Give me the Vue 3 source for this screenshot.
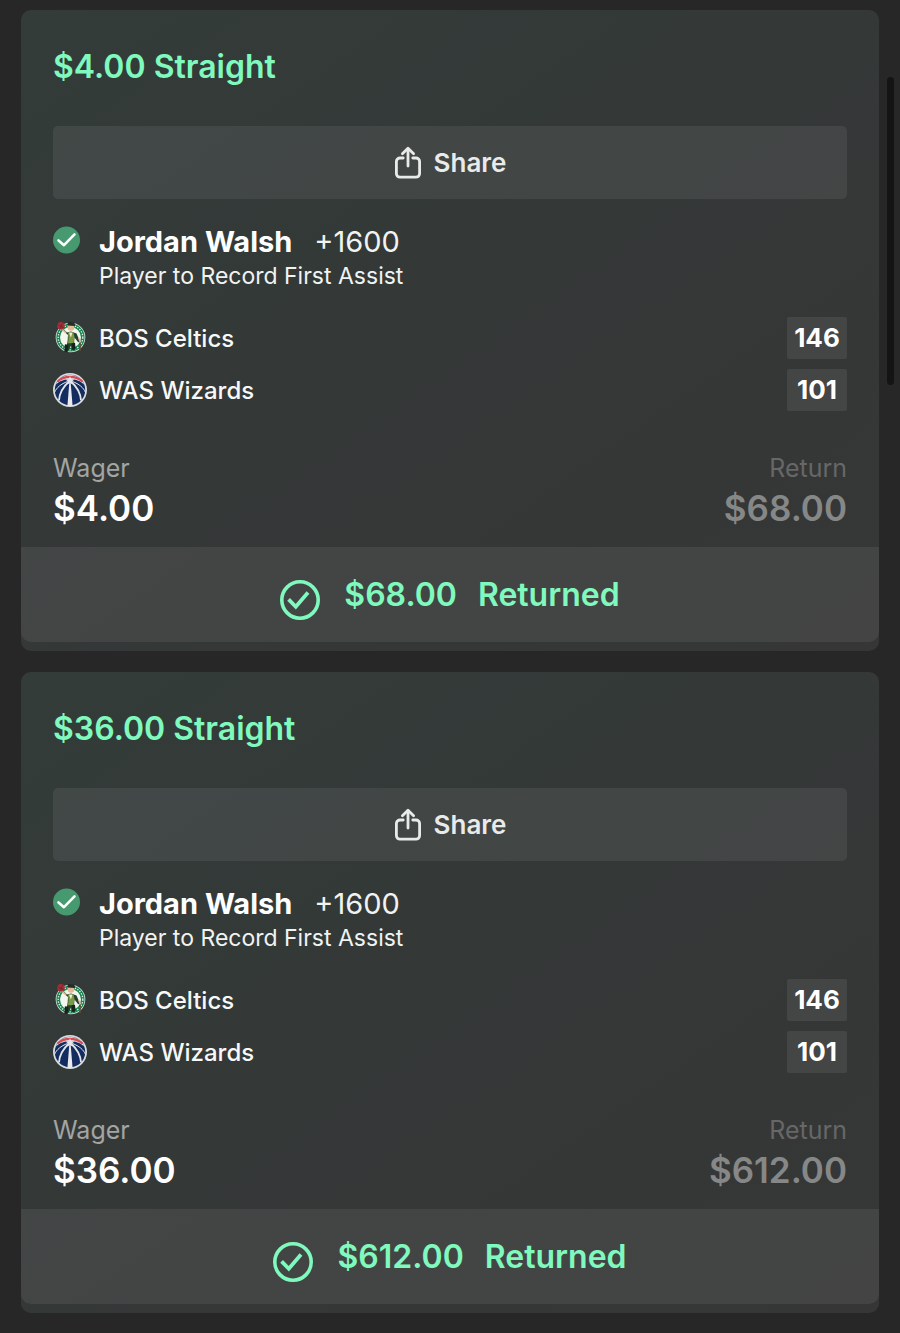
<script setup>
const bets = [
  { id: 1, wager: '$4.00', payout: '$68.00' },
  { id: 2, wager: '$36.00', payout: '$612.00' },
]
const teams = [
  { key: 'bos', name: 'BOS Celtics', score: 146 },
  { key: 'was', name: 'WAS Wizards', score: 101 },
]
</script>

<template>
  <main class="page">
    <article v-for="bet in bets" :key="bet.id" class="card">
      <div class="body">
        <h2 class="title">{{ bet.wager }} Straight</h2>

        <button type="button" class="share">
          <svg class="share-icon" viewBox="0 0 28 34" fill="none" stroke="currentColor" stroke-width="2.8" stroke-linecap="round" stroke-linejoin="round" aria-hidden="true">
            <path d="M9.2 12H6a3.6 3.6 0 0 0-3.6 3.6v12A3.6 3.6 0 0 0 6 31.200h16a3.600 3.600 0 0 0 3.600-3.600v-12A3.600 3.600 0 0 0 22 12h-3.200" />
            <path d="M14 20V3" />
            <path d="M8.400 7.800 14 2.200l5.600 5.600" />
          </svg>
          <span>Share</span>
        </button>

        <section class="leg">
          <svg class="won" viewBox="0 0 28 28" aria-hidden="true">
            <circle cx="13.500" cy="14" r="13.500" fill="#47996f" />
            <path d="M5.500 14.400 11 19.200 21.500 8.400" fill="none" stroke="#fff" stroke-width="2.600" stroke-linecap="round" stroke-linejoin="round" />
          </svg>
          <div>
            <h3 class="pick"><strong>Jordan Walsh</strong><span>+1600</span></h3>
            <p class="market">Player to Record First Assist</p>
          </div>
        </section>

        <ul class="teams">
          <li v-for="team in teams" :key="team.key" class="team">
            <svg v-if="team.key === 'bos'" class="logo" viewBox="0 0 34 34" aria-hidden="true">
              <circle cx="17.500" cy="16.500" r="14.800" fill="#e9efeb" />
              <circle cx="17.500" cy="16.500" r="12.300" fill="none" stroke="#16844c" stroke-width="3.600" />
              <circle cx="17.500" cy="16.500" r="12.300" fill="none" stroke="#e9efeb" stroke-width="1.300" stroke-dasharray="1.400 1.300" />
              <circle cx="17.500" cy="16.500" r="9.800" fill="#f4f5ee" />
              <path d="M9.500 7 14 11.500l4-1 5.500 2 3.500 8-1.800.8L21.500 16.500l-.5 6 1.500 5-1.500 2-2.500-1-.5-4-2 4.500-3 .8.600-4.300 1-5.500.4-6-4.500-4z" fill="#23402f" />
              <path d="M15 11.500h5.500l1 4.500-1 6.200H15l.5-5z" fill="#789b43" />
              <path d="M16 11.500h3.500l-1.600 5z" fill="#f5eddf" />
              <circle cx="18" cy="6.500" r="3.300" fill="#e5b995" />
              <path d="M14 4.600 15.300.800l6 .7.900 3.500z" fill="#242b28" />
              <circle cx="8" cy="4.800" r="3.800" fill="#a92d36" />
              <path d="M4.800 3.800 10.800 6.700M7 8 9.500 1.800" stroke="#58282c" stroke-width=".7" />
              <path d="m9.500 8.500 3.500 3.500M25.700 17l1.800 4.500" stroke="#e5b995" stroke-width="1.500" />
              <path d="M27 21.500V30" stroke="#65493a" stroke-width="1.600" />
              <path d="M13.600 23.500 13 31M20.300 22l.700 6.500" stroke="#18231e" stroke-width="3.400" />
            </svg>
            <svg v-else class="logo" viewBox="0 0 34 34" aria-hidden="true">
              <circle cx="17" cy="17" r="17" fill="#d8dce1" />
              <circle cx="17" cy="17" r="15.200" fill="#132d60" />
              <path d="M2.800 11.500A15.200 15.200 0 0 1 31.200 11.500C27 7.500 22 6.200 17 6.200S7 7.500 2.800 11.500z" fill="#e3e5e9" />
              <path d="M4.300 8.800C8 5.200 12 3.900 17 3.900s9 1.300 12.700 4.900" fill="none" stroke="#d64a54" stroke-width="2.200" />
              <path d="m17 3.200 1.300 2.800 3 .4-2.200 2.100.5 3-2.600-1.400-2.600 1.400.5-3-2.200-2.100 3-.4z" fill="#e3e5e9" />
              <path d="M16 8.500C11 13 6.500 19 6 27.400M18 8.500C23 13 27.500 19 28 27.400" fill="none" stroke="#e3e5e9" stroke-width="1.800" />
              <path d="M1.500 19.500c2-5 6.500-8.500 13-11M32.500 19.500c-2-5-6.500-8.500-13-11" fill="none" stroke="#e3e5e9" stroke-width="1" />
              <path d="M16.300 10h1.400l1.900 23h-5.200z" fill="#e8eaed" />
            </svg>
            <span class="team-name">{{ team.name }}</span>
            <span class="score">{{ team.score }}</span>
          </li>
        </ul>

        <dl class="amounts">
          <div>
            <dt>Wager</dt>
            <dd>{{ bet.wager }}</dd>
          </div>
          <div class="return">
            <dt>Return</dt>
            <dd>{{ bet.payout }}</dd>
          </div>
        </dl>
      </div>

      <footer class="result">
        <svg class="result-icon" viewBox="0 0 40 40" fill="none" stroke="currentColor" aria-hidden="true">
          <circle cx="20" cy="20" r="18.200" stroke-width="3.600" />
          <path d="m8.600 19.400 7.200 7.400L28 12.600" stroke-width="3.800" />
        </svg>
        <p><span>{{ bet.payout }}</span><span>Returned</span></p>
      </footer>
    </article>
    <div class="scroll-thumb" aria-hidden="true"></div>
  </main>
</template>

<style>
body {
  margin: 0;
  background: #272727;
}
</style>

<style scoped>
.page {
  position: relative;
  display: flex;
  flex-direction: column;
  gap: 21px;
  padding: 10px 21px 20px;
  background: #272727;
  color: #fff;
  font-family: Inter, "Liberation Sans", sans-serif;
}
h2, h3, p, ul, dl, dd {
  margin: 0;
  padding: 0;
}
.card {
  padding-bottom: 9px;
  border-radius: 10px;
  background: linear-gradient(145deg, #333c39 0%, #343837 50%, #363636 100%);
}
.body {
  padding: 37px 32px 15px;
}
.title {
  color: #7ff9bd;
  font-size: 32px;
  font-weight: 600;
  line-height: 40px;
}
.share {
  display: flex;
  align-items: center;
  justify-content: center;
  gap: 12px;
  width: 100%;
  height: 73px;
  margin-top: 39px;
  padding: 0;
  border: 0;
  border-radius: 5px;
  background: rgba(255, 255, 255, 0.07);
  color: #e9ebea;
  font-family: inherit;
  font-size: 26px;
  font-weight: 600;
}
.share-icon {
  width: 28px;
  height: 34px;
}
.leg {
  display: flex;
  gap: 18px;
  margin-top: 25px;
}
.won {
  width: 28px;
  height: 28px;
  margin-top: 2px;
}
.pick {
  display: flex;
  gap: 22px;
  font-size: 29px;
  font-weight: 400;
  line-height: 36px;
}
.pick strong {
  font-weight: 700;
}
.pick span {
  color: #f1f3f2;
}
.market {
  color: #f1f3f2;
  font-size: 23px;
  line-height: 32px;
}
.teams {
  display: grid;
  gap: 10px;
  margin-top: 25px;
  list-style: none;
}
.team {
  display: flex;
  align-items: center;
  gap: 12px;
}
.logo {
  width: 34px;
  height: 34px;
}
.team-name {
  flex: 1;
  color: #f7f8f7;
  font-size: 24px;
  font-weight: 500;
}
.score {
  min-width: 60px;
  border-radius: 2px;
  background: #444545;
  font-size: 26px;
  font-weight: 700;
  line-height: 42px;
  text-align: center;
}
.amounts {
  display: flex;
  justify-content: space-between;
  margin-top: 41px;
}
.amounts dt {
  color: #a2a5a3;
  font-size: 25px;
  line-height: 32px;
}
.amounts dd {
  font-size: 35px;
  font-weight: 600;
  line-height: 48px;
}
.return {
  text-align: right;
}
.amounts .return dt {
  color: #666767;
}
.return dd {
  color: #868787;
}
.result {
  display: flex;
  align-items: center;
  justify-content: center;
  gap: 24px;
  height: 95px;
  border-radius: 0 0 10px 10px;
  background: linear-gradient(145deg, #424645 0%, #434444 50%, #444 100%);
  color: #7ff9bd;
}
.result-icon {
  width: 40px;
  height: 40px;
  margin-top: 10px;
}
.result p {
  display: flex;
  gap: 21px;
  font-size: 32px;
  font-weight: 600;
  line-height: 40px;
}
.scroll-thumb {
  position: absolute;
  top: 77px;
  right: 6px;
  width: 7px;
  height: 308px;
  border-radius: 4px;
  background: #141414;
}
</style>
